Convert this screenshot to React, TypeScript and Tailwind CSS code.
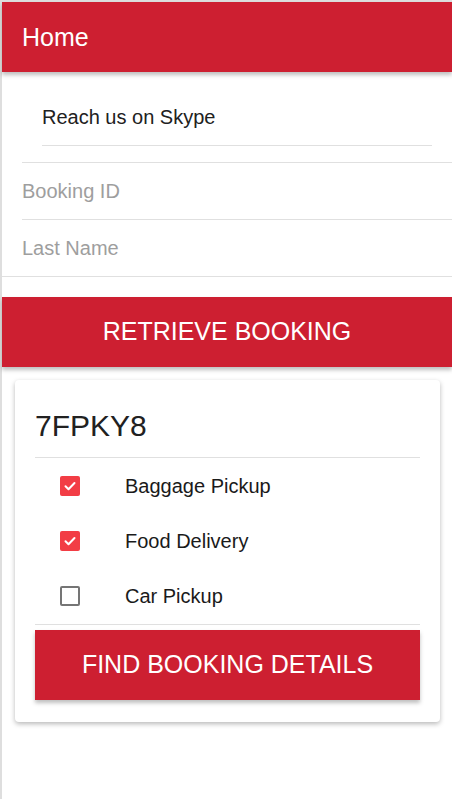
const services = [
  { label: "Baggage Pickup", checked: true },
  { label: "Food Delivery", checked: true },
  { label: "Car Pickup", checked: false },
];

function Checkbox({ checked }: { checked: boolean }) {
  if (!checked) {
    return <span className="block h-5 w-5 rounded-[2px] border-2 border-[#757575]" />;
  }
  return (
    <span className="block h-5 w-5 rounded-[2px] bg-[#f23d45]">
      <svg width="20" height="20" viewBox="0 0 20 20" fill="none">
        <path d="M5.5 10.3l3 3 6-6.3" stroke="#fff" strokeWidth="2" strokeLinecap="round" strokeLinejoin="round" />
      </svg>
    </span>
  );
}

export default function App() {
  return (
    <div className="min-h-[799px] border-l-2 border-t-2 border-[#dedede] bg-white font-['Liberation_Sans',Arial,sans-serif] text-[#212121]">
      {/* App bar */}
      <header className="relative z-10 flex h-[70px] items-center bg-[#cd1f31] pl-5 shadow-[0_3px_4px_rgba(0,0,0,0.25)]">
        <h1 className="text-[25px] leading-none text-white">Home</h1>
      </header>

      {/* Lookup form */}
      <div className="pl-5">
        <div className="border-b border-[#e0e0e0] pb-4">
          <div className="mx-5 border-b border-[#e0e0e0] pt-[33px] pb-4 text-[20px] leading-6">
            Reach us on Skype
          </div>
        </div>
        <div className="flex h-[57px] items-center border-b border-[#e0e0e0] text-[20px] leading-6 text-[#9e9e9e]">
          Booking ID
        </div>
      </div>
      <div className="flex h-[57px] items-center border-b border-[#e0e0e0] pl-5 text-[20px] leading-6 text-[#9e9e9e]">
        Last Name
      </div>

      <button
        type="button"
        className="mt-5 flex h-[70px] w-full items-center justify-center bg-[#cd1f31] text-[25px] text-white shadow-[0_3px_4px_rgba(0,0,0,0.25)]"
      >
        RETRIEVE BOOKING
      </button>

      {/* Booking card */}
      <section className="mt-[13px] ml-[13px] mr-[12px] rounded-[4px] bg-white px-5 pb-[22px] shadow-[0_2px_5px_rgba(0,0,0,0.28)]">
        <h2 className="border-b border-[#e0e0e0] pt-[28px] pb-[13px] text-[30px] leading-9">7FPKY8</h2>
        <ul className="border-b border-[#e0e0e0] pb-px">
          {services.map((s) => (
            <li key={s.label} className="flex h-[55px] items-center">
              <span className="ml-[25px]">
                <Checkbox checked={s.checked} />
              </span>
              <span className="ml-[45px] text-[20px] leading-6 text-[#1a1a1a]">{s.label}</span>
            </li>
          ))}
        </ul>
        <button
          type="button"
          className="mt-[5px] flex h-[70px] w-full items-center justify-center bg-[#cd1f31] text-[25px] text-white shadow-[0_3px_4px_rgba(0,0,0,0.25)]"
        >
          FIND BOOKING DETAILS
        </button>
      </section>
    </div>
  );
}
